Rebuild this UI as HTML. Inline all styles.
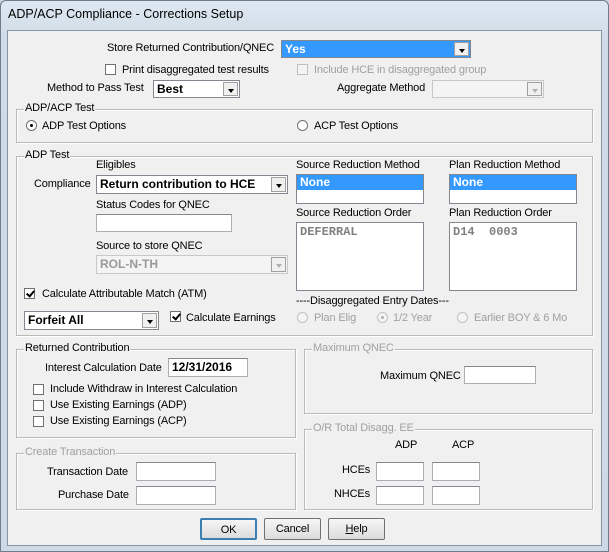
<!DOCTYPE html>
<html><head><meta charset="utf-8">
<style>
*{box-sizing:border-box;margin:0;padding:0}
body{width:609px;height:552px;overflow:hidden;background:#c9d6e3;font-family:"Liberation Sans",sans-serif;font-size:11px;letter-spacing:-0.15px;color:#000;position:relative}
.a{position:absolute;white-space:nowrap;line-height:13px}
.frame{position:absolute;left:0;top:0;width:609px;height:552px;background:linear-gradient(#dfe8f1,#cfdbe7 40px,#cdd9e5);border:1px solid #6d7d8c;border-radius:6px 6px 0 0}
.client{position:absolute;left:7px;top:30px;width:595px;height:516px;background:#f0f0f0;border:1px solid #8796a6}
.title{position:absolute;left:8px;top:7px;font-size:12.5px;letter-spacing:0;color:#000}
.grp{position:absolute;border:1px solid #b9b9b9;box-shadow:1px 1px 0 #fff,inset 1px 1px 0 #fff}
.grp>span{position:absolute;left:7px;top:-8px;background:#f0f0f0;padding:0 1px;line-height:13px}
.g{color:#a0a0a0}
.edit{position:absolute;background:#fff;border:1px solid #abadb3;border-top-color:#828790}
.combo{position:absolute;background:#fff;border:1px solid #828790;font-weight:bold;font-size:12px;letter-spacing:0;padding-left:3px;line-height:16px}
.combo .btn{position:absolute;right:1px;top:1px;bottom:1px;width:15px;background:#f0f0f0;border:1px solid #a0a0a0}
.combo .btn:after{content:"";position:absolute;left:4px;top:6px;border:3.5px solid transparent;border-top:4px solid #000}
.combo.dis{background:#f4f4f4;color:#999;border-color:#c8c8c8}
.combo.dis .btn:after{border-top-color:#b0b0b0}
.cb{position:absolute;width:11px;height:11px;border:1px solid #707070;background:#fff}
.cb.dis{border-color:#c0c0c0;background:#f4f4f4}
.cb.chk:after{content:"";position:absolute;left:3px;top:0px;width:3px;height:6px;border:solid #000;border-width:0 2px 2px 0;transform:rotate(40deg)}
.rd{position:absolute;width:11px;height:11px;border:1px solid #707070;border-radius:50%;background:#fff}
.rd.dis{border-color:#c0c0c0;background:#f4f4f4}
.rd.on:after{content:"";position:absolute;left:3px;top:3px;width:3px;height:3px;border-radius:50%;background:#000}
.rd.dis.on:after{background:#b0b0b0}
.list{position:absolute;background:#fff;border:1px solid #828790;font-weight:bold;font-size:12px;letter-spacing:0}
.sel{background:#3399ff;color:#fff;height:15px;line-height:15px;padding-left:3px}
.button{position:absolute;height:22px;width:57px;background:linear-gradient(#f6f6f6,#dcdcdc);border:1px solid #707070;border-radius:2px;text-align:center;line-height:20px}
</style></head><body>
<div class="frame"></div>
<div class="title">ADP/ACP Compliance - Corrections Setup</div>
<div class="client"></div>

<div class="a" style="left:107px;top:42px">Store Returned Contribution/QNEC</div>
<div class="combo" style="left:281px;top:40px;width:190px;height:18px;background:#3399ff;color:#fff">Yes<div class="btn"></div></div>

<div class="cb" style="left:105px;top:64px"></div>
<div class="a" style="left:122px;top:64px">Print disaggregated test results</div>
<div class="cb dis" style="left:297px;top:64px"></div>
<div class="a g" style="left:314px;top:64px">Include HCE in disaggregated group</div>

<div class="a" style="left:47px;top:82px">Method to Pass Test</div>
<div class="combo" style="left:153px;top:80px;width:87px;height:18px">Best<div class="btn"></div></div>
<div class="a" style="left:337px;top:82px">Aggregate Method</div>
<div class="combo dis" style="left:432px;top:80px;width:112px;height:18px"><div class="btn"></div></div>

<div class="grp" style="left:16px;top:109px;width:577px;height:34px"><span>ADP/ACP Test</span></div>
<div class="rd on" style="left:26px;top:120px"></div>
<div class="a" style="left:42px;top:120px">ADP Test Options</div>
<div class="rd" style="left:297px;top:120px"></div>
<div class="a" style="left:314px;top:120px">ACP Test Options</div>

<div class="grp" style="left:16px;top:156px;width:577px;height:180px"><span>ADP Test</span></div>
<div class="a" style="left:96px;top:159px">Eligibles</div>
<div class="a" style="left:34px;top:178px">Compliance</div>
<div class="combo" style="left:96px;top:175px;width:192px;height:19px">Return contribution to HCE<div class="btn"></div></div>
<div class="a" style="left:96px;top:199px">Status Codes for QNEC</div>
<div class="edit" style="left:96px;top:214px;width:136px;height:18px"></div>
<div class="a" style="left:96px;top:240px">Source to store QNEC</div>
<div class="combo dis" style="left:96px;top:255px;width:192px;height:19px">ROL-N-TH<div class="btn"></div></div>

<div class="a" style="left:296px;top:159px">Source Reduction Method</div>
<div class="list" style="left:296px;top:174px;width:128px;height:30px"><div class="sel">None</div></div>
<div class="a" style="left:449px;top:159px">Plan Reduction Method</div>
<div class="list" style="left:449px;top:174px;width:128px;height:30px"><div class="sel">None</div></div>
<div class="a" style="left:296px;top:207px">Source Reduction Order</div>
<div class="list" style="left:296px;top:222px;width:128px;height:69px;color:#808080;font-family:'Liberation Mono',monospace;padding:2px 3px">DEFERRAL</div>
<div class="a" style="left:449px;top:207px">Plan Reduction Order</div>
<div class="list" style="left:449px;top:222px;width:128px;height:69px;color:#808080;font-family:'Liberation Mono',monospace;padding:2px 3px;white-space:pre">D14  0003</div>

<div class="cb chk" style="left:24px;top:288px"></div>
<div class="a" style="left:42px;top:288px">Calculate Attributable Match (ATM)</div>
<div class="a" style="left:296px;top:295px">----Disaggregated Entry Dates---</div>
<div class="combo" style="left:24px;top:311px;width:135px;height:19px">Forfeit All<div class="btn"></div></div>
<div class="cb chk" style="left:170px;top:311px"></div>
<div class="a" style="left:186px;top:312px">Calculate Earnings</div>
<div class="rd dis" style="left:297px;top:312px"></div>
<div class="a g" style="left:314px;top:312px">Plan Elig</div>
<div class="rd dis on" style="left:377px;top:312px"></div>
<div class="a g" style="left:393px;top:312px">1/2 Year</div>
<div class="rd dis" style="left:457px;top:312px"></div>
<div class="a g" style="left:474px;top:312px">Earlier BOY &amp; 6 Mo</div>

<div class="grp" style="left:16px;top:349px;width:280px;height:89px"><span>Returned Contribution</span></div>
<div class="a" style="left:45px;top:362px">Interest Calculation Date</div>
<div class="edit" style="left:168px;top:358px;width:80px;height:19px;font-weight:bold;font-size:12px;letter-spacing:0;padding-left:3px;line-height:16px">12/31/2016</div>
<div class="cb" style="left:33px;top:384px"></div>
<div class="a" style="left:50px;top:383px">Include Withdraw in Interest Calculation</div>
<div class="cb" style="left:33px;top:400px"></div>
<div class="a" style="left:50px;top:399px">Use Existing Earnings (ADP)</div>
<div class="cb" style="left:33px;top:416px"></div>
<div class="a" style="left:50px;top:415px">Use Existing Earnings (ACP)</div>

<div class="grp" style="left:16px;top:453px;width:280px;height:57px"><span class="g">Create Transaction</span></div>
<div class="a" style="left:47px;top:466px">Transaction Date</div>
<div class="edit" style="left:136px;top:462px;width:80px;height:19px"></div>
<div class="a" style="left:58px;top:489px">Purchase Date</div>
<div class="edit" style="left:136px;top:486px;width:80px;height:19px"></div>

<div class="grp" style="left:304px;top:349px;width:289px;height:65px"><span class="g">Maximum QNEC</span></div>
<div class="a" style="left:380px;top:370px">Maximum QNEC</div>
<div class="edit" style="left:464px;top:366px;width:72px;height:18px"></div>

<div class="grp" style="left:304px;top:429px;width:289px;height:81px"><span class="g">O/R Total Disagg. EE</span></div>
<div class="a" style="left:395px;top:439px">ADP</div>
<div class="a" style="left:452px;top:439px">ACP</div>
<div class="a" style="left:342px;top:464px">HCEs</div>
<div class="edit" style="left:376px;top:462px;width:48px;height:19px"></div>
<div class="edit" style="left:432px;top:462px;width:48px;height:19px"></div>
<div class="a" style="left:334px;top:488px">NHCEs</div>
<div class="edit" style="left:376px;top:486px;width:48px;height:19px"></div>
<div class="edit" style="left:432px;top:486px;width:48px;height:19px"></div>

<div class="button" style="left:200px;top:518px;border:2px solid #3c7fb1">OK</div>
<div class="button" style="left:264px;top:518px">Cancel</div>
<div class="button" style="left:328px;top:518px"><u>H</u>elp</div>
</body></html>
